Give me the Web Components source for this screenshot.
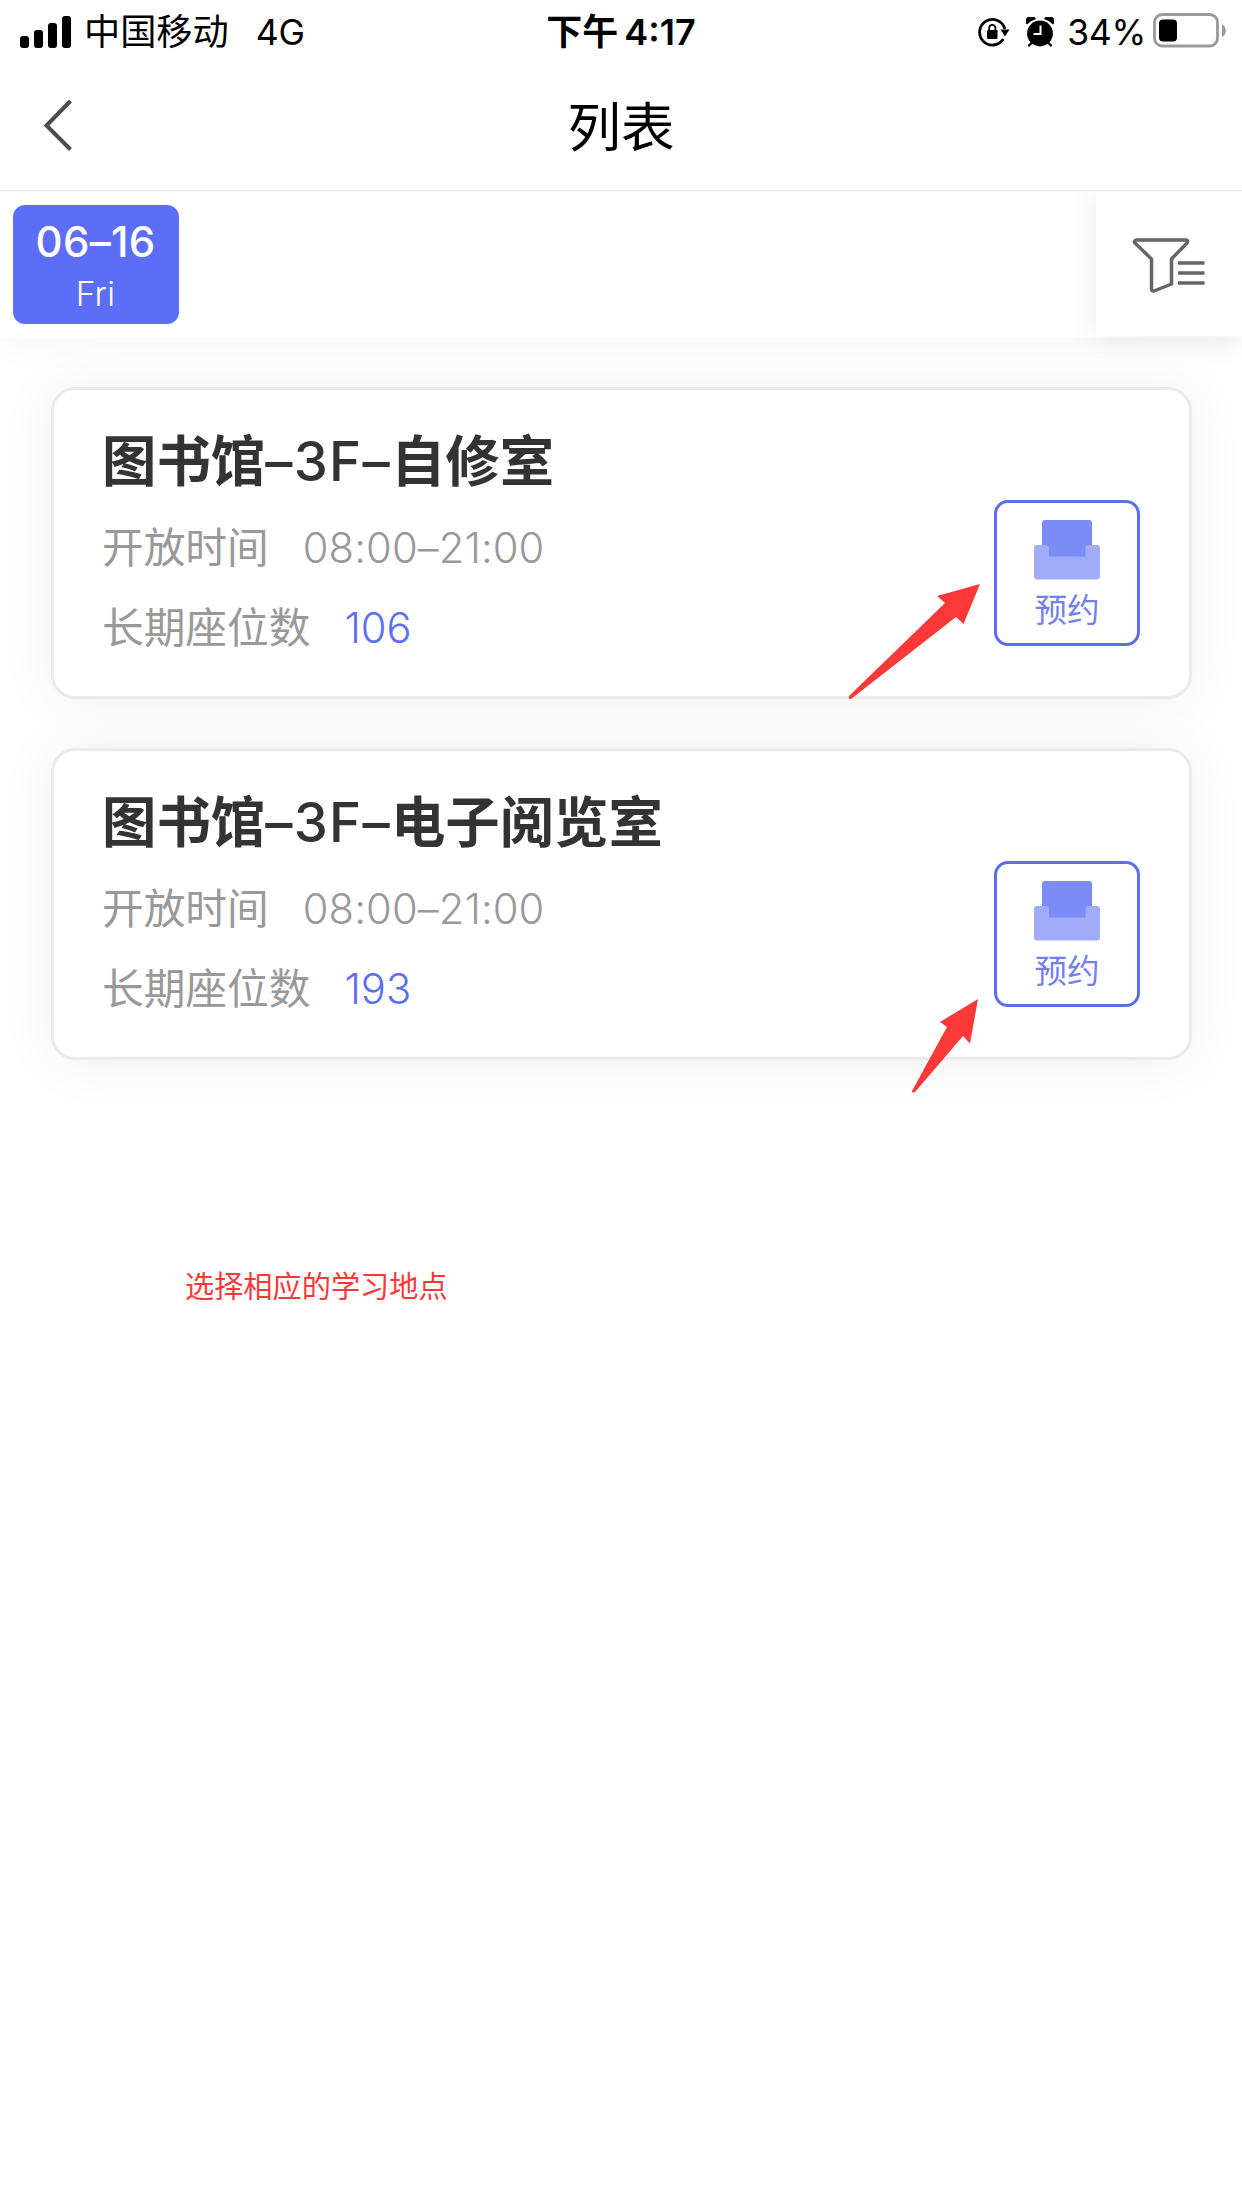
<!DOCTYPE html>
<html lang="zh-CN">
<head>
<meta charset="utf-8">
<title>列表</title>
<style>
html,body{margin:0;background:#fff}
body{font-family:Inter,"Noto Sans CJK SC",sans-serif;color:#000}
</style>
</head>
<body>
<seat-app></seat-app>
<script>
const define = (name, html) => customElements.define(name, class extends HTMLElement {
  constructor() {
    super();
    const t = document.createElement('template');
    t.innerHTML = html;
    this.attachShadow({mode: 'open'}).appendChild(t.content.cloneNode(true));
  }
});

define('status-bar', `
<style>
:host{display:grid;grid-template-columns:1fr auto 1fr;align-items:center;height:62px;font-size:35.5px;line-height:62px;white-space:pre}
.l,.r{display:flex;align-items:center}
.l{padding-left:20px}
.r{justify-content:flex-end;padding-right:15px}
.cn,.net,.time,.pct{padding-top:1px;line-height:61px}
.cn{font-size:36.200px;margin-left:13px;padding-top:2px}
.net{margin-left:27px;letter-spacing:-.3px}
.time{font-weight:600;font-size:36px}
.time b{font-weight:600;margin-left:-3px}
.pct{margin:0 7px 0 13px;letter-spacing:-.3px}
svg{display:block}
</style>
<div class="l">
<svg width="51" height="32" viewBox="0 0 51 32"><rect y="20" width="9" height="12" rx="3"/><rect x="14" y="14" width="9" height="18" rx="3"/><rect x="28" y="7" width="9" height="25" rx="3"/><rect x="42" width="9" height="32" rx="3"/></svg>
<span class="cn">中国移动</span><span class="net">4G</span></div>
<div class="time">下午 <b>4:17</b></div>
<div class="r">
<svg width="32" height="30" viewBox="0 0 32 30"><path d="M25.300 22A12.800 12.800 0 1 1 26.800 12" fill="none" stroke="#000" stroke-width="2.800"/><path d="M22.500 12.500H31.500L27 19.500Z"/><rect x="9" y="13" width="10.500" height="9" rx="1.200"/><path d="M11.200 14v-3a3.100 3.100 0 0 1 6.200 0v3" fill="none" stroke="#000" stroke-width="1.800"/></svg>
<svg style="margin-left:16px" width="28" height="30" viewBox="0 0 28 30"><circle cx="14" cy="16.500" r="12.900"/><path d="M1 6.500A4.300 4.300 0 0 1 9 1.800Q4 3 1 6.500ZM27 6.500A4.300 4.300 0 0 0 19 1.800Q24 3 27 6.500Z" stroke="#000" stroke-width="1.500" stroke-linejoin="round"/><path d="M6 25.500l-3 3M22 25.500l3 3" stroke="#000" stroke-width="2.400" stroke-linecap="round"/><path d="M14.500 8.500v8.500H7.500" fill="none" stroke="#fff" stroke-width="2"/></svg>
<span class="pct">34%</span>
<svg style="margin-bottom:2px" width="74" height="35" viewBox="0 0 74 35"><rect x="1.500" y="1.500" width="63" height="31.500" rx="8" fill="#fff" stroke="#999" stroke-width="2.800"/><rect x="6" y="6.500" width="18" height="22" rx="4"/><path d="M69 11.500c5 2 5 10.500 0 12.500Z" fill="#999"/></svg>
</div>`);

define('nav-header', `
<style>
:host{display:grid;grid-template-columns:1fr auto 1fr;height:128px;border-bottom:1px solid #e6e6e6;line-height:131px;font-size:53.500px}
svg{margin:37px 0 0 43px}
</style>
<svg width="32" height="54" viewBox="0 0 32 54"><path d="M27.500 2L3.500 26.500L27.500 50.500" fill="none" stroke="#4c4c4c" stroke-width="4"/></svg>
<slot></slot>`);

define('date-pill', `
<style>
:host{display:flex;flex-direction:column;align-items:center;width:166px;height:119px;border-radius:12px;background:#5c6ef7;color:#fff}
.d{font-size:42px;font-weight:500;line-height:50px;margin-top:12px;margin-left:-1px;letter-spacing:.3px}
.w{font-size:33.500px;font-weight:300;line-height:40px;margin-top:7px;margin-left:-1px;letter-spacing:.2px}
</style><div class="d"><slot name="date"></slot></div><div class="w"><slot></slot></div>`);

define('filter-button', `
<style>
:host{display:block;width:146px;height:145px;background:#fff;box-shadow:0 0 30px rgba(0,0,0,.09)}
svg{display:block;padding:46px 0 0 36px}
</style>
<svg width="74" height="56" viewBox="0 0 74 56"><path d="M4 3H54.500Q56.500 4 55 6L39.500 22V47L22 54Q19.500 54.500 19.500 52V22L3 6Q1.500 4 4 3Z" fill="none" stroke="#666" stroke-width="3.500" stroke-linejoin="round"/><path d="M46 26H72.500M46 36H72.500M46 46H72.500" stroke="#666" stroke-width="3.600"/></svg>`);

define('date-bar', `
<style>
:host{display:flex;justify-content:space-between;height:147px;background:#fff;position:relative;z-index:1;clip-path:inset(0 0 -50px 0);box-shadow:0 0 40px rgba(0,0,0,.05)}
date-pill{margin:14px 0 0 13px}
</style><date-pill><span slot="date">06–16</span>Fri</date-pill><filter-button></filter-button>`);

define('reserve-button', `
<style>
:host{box-sizing:border-box;display:flex;flex-direction:column;align-items:center;width:146px;height:146px;border:3px solid #5c6ef0;border-radius:14px;background:#fff;color:#7381ee;font-size:32.500px;line-height:40px;font-weight:400}
svg{display:block;margin:17px 0 11px}
</style>
<svg width="66" height="60" viewBox="0 0 66 60"><rect x="8" width="50" height="40" rx="3" fill="#7b8bf7"/><path d="M3 25H12Q15 25 15 28V36.500H51.500V28Q51.500 25 54.500 25H63Q66 25 66 28V56.500Q66 59.500 63 59.500H3Q0 59.500 0 56.500V28Q0 25 3 25Z" fill="#a0abf9"/></svg>
<slot></slot>`);

define('room-card', `
<style>
:host{box-sizing:border-box;display:flex;justify-content:space-between;height:312px;border:3px solid #ebebeb;border-radius:24px;background:#fff;padding:41px 49px 0 48px;box-shadow:0 0 60px rgba(0,0,0,.065);white-space:nowrap}
.name{font-size:54.400px;font-weight:600;line-height:61px;color:#333}
.row{display:flex;font-size:41.700px;line-height:79px;color:#999;font-weight:400}
.row.first{margin-top:17px}
.row + .row{padding-top:1px}
.time{margin-left:34px;font-weight:350;letter-spacing:.1px}
.count{margin-left:34px;font-weight:350;color:#5c6ef7}
reserve-button{margin-top:69px}
</style>
<div><div class="name"><slot name="name"></slot></div>
<div class="row first"><span>开放时间</span><span class="time"><slot name="time"></slot></span></div>
<div class="row"><span>长期座位数</span><span class="count"><slot name="count"></slot></span></div></div>
<reserve-button>预约</reserve-button>`);

define('seat-app', `
<style>
:host{display:block;position:relative;width:1242px;height:2208px;overflow:hidden;background:#fff}
main{display:flex;flex-direction:column;gap:49px;padding:49px 50px 0 51px}
.lat{font-weight:550;letter-spacing:1.300px}
.note{margin:204px 0 0 185px;font-size:29.200px;line-height:40px;color:#fc3838;font-family:"Noto Sans CJK SC",sans-serif}
.a{position:absolute;left:0;top:0;z-index:2;pointer-events:none}
</style>
<status-bar></status-bar>
<nav-header>列表</nav-header>
<date-bar></date-bar>
<main>
<room-card><span slot="name">图书馆<span class="lat">–3F–</span>自修室</span><span slot="time">08:00–21:00</span><span slot="count">106</span></room-card>
<room-card><span slot="name">图书馆<span class="lat">–3F–</span>电子阅览室</span><span slot="time">08:00–21:00</span><span slot="count">193</span></room-card>
</main>
<div class="note">选择相应的学习地点</div>
<svg class="a" width="1242" height="1100" fill="#fc3838"><path d="M980 584L937 596L945 603L849 696Q848 699 851 699L956 617L963.500 624Z"/><path d="M978 999L940 1022L947 1027L912 1091Q912 1094 915 1092L963 1036L970 1043.500Z"/></svg>`);
</script>
</body>
</html>
